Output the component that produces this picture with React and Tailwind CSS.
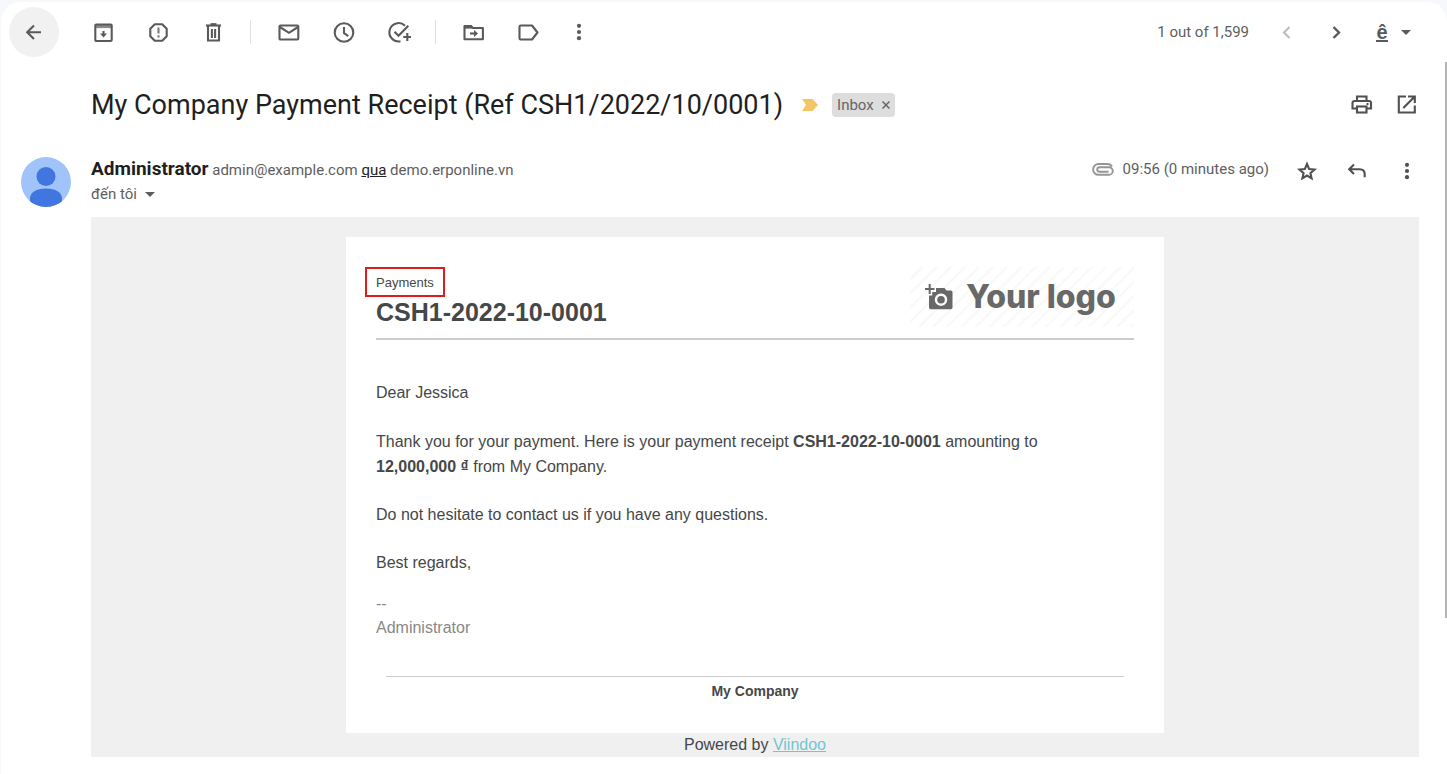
const googleSans = "font-['Google_Sans',Roboto,'Liberation_Sans',sans-serif]";

function Icon({ children, className = "size-6" }) {
  return (
    <svg viewBox="0 0 24 24" className={className} fill="none" stroke="currentColor" strokeWidth="2.1" aria-hidden="true">
      {children}
    </svg>
  );
}

function IconButton({ label, children, className = "" }) {
  return (
    <button type="button" aria-label={label} className={`flex size-6 shrink-0 items-center justify-center ${className}`}>
      <Icon>{children}</Icon>
    </button>
  );
}

function Caret() {
  return (
    <svg viewBox="0 0 10 5" className="h-[5px] w-[10px]" fill="currentColor" aria-hidden="true">
      <path d="M0 0h10L5 5z" />
    </svg>
  );
}

const dots = (
  <g fill="currentColor" stroke="none">
    <circle cx="12" cy="5.8" r="2.1" />
    <circle cx="12" cy="12" r="2.1" />
    <circle cx="12" cy="18.2" r="2.1" />
  </g>
);

function Toolbar() {
  return (
    <header className="flex h-15 items-center pl-2 pr-9 text-[#5a5a5a]">
      <button type="button" aria-label="Back" className="flex size-[50px] items-center justify-center rounded-full bg-[#f1f1f1]">
        <Icon>
          <path d="M19 12.300H5.500M12 5.500L5.200 12.300l6.800 6.800" />
        </Icon>
      </button>
      <div className="ml-8 flex items-center gap-[31px]">
        <IconButton label="Archive">
          <rect x="4.300" y="4.500" width="16.400" height="16.500" rx="1" />
          <path d="M4 6.300h17" strokeWidth="3.600" strokeOpacity="0.7" />
          <path d="M12.500 11v3" />
          <path d="M9 13.500h7l-3.500 4z" fill="currentColor" stroke="none" />
        </IconButton>
        <IconButton label="Report spam">
          <path d="M8.800 4.300h7.400l4.500 4.500v7.400l-4.500 4.500H8.800l-4.500-4.500V8.800z" strokeLinejoin="round" />
          <path d="M12.500 7.500v6M12.500 15.300v2.200" strokeOpacity="0.8" />
        </IconButton>
        <IconButton label="Delete">
          <path d="M7 6v14.500h11V6" />
          <path d="M5 5.500h15" />
          <path d="M9.500 4.200h6" />
          <path d="M10.900 9v9M14.100 9v9" />
        </IconButton>
      </div>
      <span className="ml-[25px] mr-[26px] h-6 w-px bg-[#e0e0e0]" />
      <div className="flex items-center gap-[31px]">
        <IconButton label="Mark as unread">
          <rect x="2.500" y="5.500" width="18.800" height="14" rx="1" />
          <path d="M2.800 7l9.200 5.800L21 7" />
        </IconButton>
        <IconButton label="Snooze">
          <circle cx="12" cy="12.500" r="9.300" />
          <path d="M12 7v6l4.200 3.200" />
        </IconButton>
        <IconButton label="Add to tasks">
          <path d="M18 5.700a9.200 9.200 0 1 0-4.500 15.600" />
          <path d="M7.500 11.800l4 4L21.300 5.700" />
          <path d="M20.300 13v8M16.300 17h8" />
        </IconButton>
      </div>
      <span className="ml-6 mr-[26px] h-6 w-px bg-[#e0e0e0]" />
      <div className="flex items-center gap-[31px]">
        <IconButton label="Move to">
          <path d="M2.500 19.200V6h6.500l2 2H20.900v11.200z" strokeLinejoin="round" />
          <path d="M2.500 7h7.500" strokeWidth="3.200" />
          <path d="M8 13.500h5" />
          <path d="M12 10l4 3.500-4 3.500z" fill="currentColor" stroke="none" />
        </IconButton>
        <IconButton label="Labels">
          <path d="M2.500 6.700q0-1.200 1.200-1.200h11.300l5.500 7-5.500 7H3.700q-1.200 0-1.200-1.200z" strokeLinejoin="round" />
        </IconButton>
        <IconButton label="More" className="-ml-[5px]">{dots}</IconButton>
      </div>
      <div className={`ml-auto flex items-center ${googleSans}`}>
        <span className="text-[15px] leading-6 text-[#5e5e5e]">1 out of 1,599</span>
        <IconButton label="Newer" className="ml-[26px] text-[#bcbcbc]">
          <path d="M14.500 7L9 12.500l5.500 5.500" />
        </IconButton>
        <IconButton label="Older" className="ml-[25px]">
          <path d="M9.500 7l5.500 5.500L9.500 18" strokeWidth="2.400" />
        </IconButton>
        <button type="button" aria-label="Select input tool" className="ml-7 flex items-center gap-[13px]">
          <span className="w-3 border-b-2 border-current pt-[2px] text-center font-['Liberation_Sans',Arial,sans-serif] text-[20px] leading-4 font-bold">ê</span>
          <Caret />
        </button>
      </div>
    </header>
  );
}

function Subject() {
  return (
    <div className="flex items-center pl-[90px] pr-7 text-[#505050]">
      <h1 className="text-[27px] leading-9 text-[#1f1f1f]">My Company Payment Receipt (Ref CSH1/2022/10/0001)</h1>
      <svg viewBox="0 0 16 12" className="ml-[19px] h-3 w-4 shrink-0" role="img" aria-label="Important">
        <path d="M0 0h10.500L16 6l-5.500 6H0l4-6z" fill="#f3c567" />
      </svg>
      <div className="ml-[14px] flex h-6 items-center gap-2 rounded bg-[#ddd] px-[5px] text-[15px] text-[#666]">
        <span>Inbox</span>
        <button type="button" aria-label="Remove label Inbox">
          <svg viewBox="0 0 8 8" className="size-2" stroke="currentColor" strokeWidth="1.500" aria-hidden="true">
            <path d="M0.500 0.500l7 7M7.500 0.500l-7 7" />
          </svg>
        </button>
      </div>
      <div className="ml-auto flex items-center gap-[21px]">
        <IconButton label="Print all">
          <path d="M7 8V3.500h9.500V8M6.500 15.500h-4V10q0-2 2-2h14.500q2 0 2 2v5.500H16.500" />
          <rect x="7" y="13.500" width="9.500" height="6" />
          <path d="M16.500 11h2" />
        </IconButton>
        <IconButton label="Open in new window">
          <path d="M11 3.500H3.800v16h16v-7M13 3.500h6.800v6.500M19.800 3.500L8.300 15" />
        </IconButton>
      </div>
    </div>
  );
}

function Sender() {
  return (
    <div className="mt-[34px] flex pl-5 pr-7 text-[15px] leading-6 text-[#5e5e5e]">
      <svg viewBox="0 0 50 50" className="size-[50px] shrink-0" role="img" aria-label="Administrator">
        <defs>
          <clipPath id="avatar">
            <circle cx="25" cy="25" r="25" />
          </clipPath>
        </defs>
        <g clipPath="url(#avatar)">
          <path d="M0 0h50v50H0z" fill="#a0c3fa" />
          <circle cx="25" cy="19.500" r="9.500" fill="#4175df" />
          <path d="M9 50V41q1-9 16-9.500Q40 32 41 41v9z" fill="#4175df" />
        </g>
      </svg>
      <div className="ml-5">
        <div>
          <span className="text-[19px] font-bold text-[#1f1f1f]">Administrator</span> admin@example.com{" "}
          <a href="#via" className="text-[#222] underline">qua</a> demo.erponline.vn
        </div>
        <button type="button" className="flex items-center gap-2">
          đến tôi
          <Caret />
        </button>
      </div>
      <div className="ml-auto flex h-6 items-center">
        <svg viewBox="0 0 22 13" className="h-[13px] w-[22px]" fill="none" stroke="#959595" strokeWidth="1.900" role="img" aria-label="Has attachment">
          <path d="M20 3.500Q18.500 1 15.500 1H6.500a5.300 5.300 0 0 0 0 10.800H17a3.800 3.800 0 0 0 0-7.600H7.500a2.200 2.200 0 0 0 0 4.500H16.500" />
        </svg>
        <span className="ml-[9px]">09:56 (0 minutes ago)</span>
        <div className="mt-1 ml-[26px] flex gap-[26px] text-[#505050]">
          <IconButton label="Star">
            <path d="M12 5l2.100 5 5.400.5-4.100 3.600 1.200 5.300-4.600-2.800-4.600 2.800 1.200-5.300-4.100-3.600 5.400-.5z" />
          </IconButton>
          <IconButton label="Reply">
            <path d="M9 5.500L4.200 10.300l4.800 4.800M4.200 10.300H14.700q5 0 5 5v3" />
          </IconButton>
          <IconButton label="More message options">{dots}</IconButton>
        </div>
      </div>
    </div>
  );
}

function Logo() {
  return (
    <div
      role="img"
      aria-label="Your logo"
      className="flex h-[60px] w-56 items-center bg-[repeating-linear-gradient(135deg,#fff_0px,#fff_7px,#f9f9f9_8px,#f9f9f9_10px)] pl-[15px] text-[#686868]"
    >
      <svg viewBox="0 0 29 26" className="h-[26px] w-[29px]" fill="currentColor" aria-hidden="true">
        <path d="M3.700 0h2v4h3.800v2H5.700v4h-2V6H0V4h3.700z" />
        <path fillRule="evenodd" d="M11 4h8.500l2 2.500H26q1.500 0 1.500 2v15q0 1.800-1.800 1.800H5.800Q4 25.300 4 23.500V11.500h3.200V8H11zM16 9.500a6.200 6.200 0 1 0 .01 0z" />
        <circle cx="16" cy="15.700" r="3.800" />
      </svg>
      <span className="ml-3 font-[Inter,sans-serif] text-[32px] leading-10 font-extrabold">Your logo</span>
    </div>
  );
}

function MailBody() {
  return (
    <section className="ml-[90px] mr-7 mt-[10px] bg-[#f0f0f0] px-5 pt-5 font-['Liberation_Sans',Arial,sans-serif] text-[16px] leading-6 text-[#454748]">
      <article className="mx-auto max-w-[818px] bg-white px-[30px] pt-[30px] pb-8">
        <div className="flex justify-between border-b-2 border-[#ccc] pb-[11px]">
          <div>
            <div className="-ml-[11px] flex h-[30px] w-fit items-center border-2 border-[#e01b1b] px-[9px] pt-[2px] text-[13px]">Payments</div>
            <h2 className="text-[25px] leading-[30px] font-bold">CSH1-2022-10-0001</h2>
          </div>
          <Logo />
        </div>
        <div className="flex flex-col gap-6 pt-[41px]">
          <p>Dear Jessica</p>
          <p className="leading-[25px]">
            Thank you for your payment. Here is your payment receipt <b>CSH1-2022-10-0001</b> amounting to
            <br />
            <b>12,000,000 ₫</b> from My Company.
          </p>
          <p>Do not hesitate to contact us if you have any questions.</p>
          <p>Best regards,</p>
        </div>
        <p className="mt-[17px] text-[#888]">
          --
          <br />
          Administrator
        </p>
        <footer className="mx-[10px] mt-9 border-t border-[#ccc] pt-1 text-center text-[14px] leading-5 font-bold">My Company</footer>
      </article>
      <p className="text-center">
        Powered by{" "}
        <a href="#viindoo" className="text-[#71c5cf] underline">Viindoo</a>
      </p>
    </section>
  );
}

export default function App() {
  return (
    <div className={`min-h-screen bg-[#f6f8fc] pt-[2px] pl-px ${googleSans}`}>
      <main className="min-h-[calc(100vh-2px)] rounded-t-[20px] bg-white">
        <Toolbar />
        <div className="relative pt-[25px]">
          <span className="absolute top-0 right-0 h-[556px] w-[2px] bg-[#b5b5b5]" />
          <Subject />
          <Sender />
          <MailBody />
        </div>
      </main>
    </div>
  );
}
